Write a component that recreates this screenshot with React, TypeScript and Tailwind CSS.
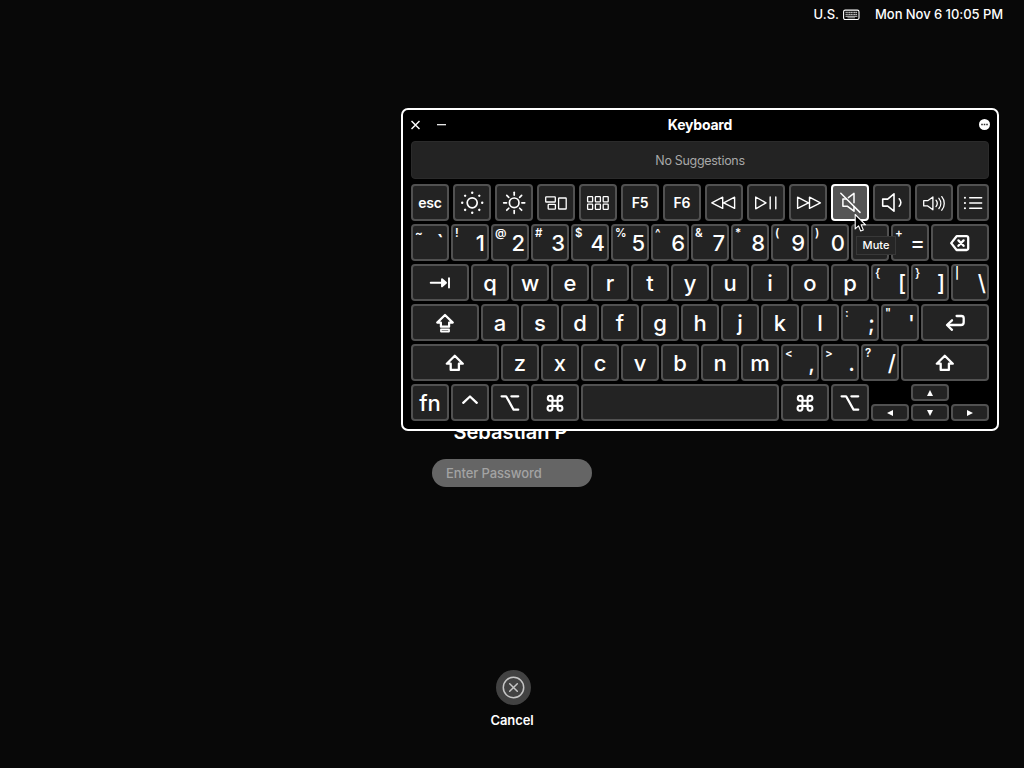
import { ReactNode } from "react";
import clsx from "clsx";

interface KeyProps {
    label?: string;
    shifted?: string;
    icon?: ReactNode;
    width?: string;
    small?: boolean;
    active?: boolean;
    inset?: string;
}

interface IconProps {
    width?: number;
    height?: number;
    stroke?: number;
    children: ReactNode;
}

// Icons are drawn in the coordinates of the key they sit on
const Icon = ({ width = 38, height = 37, stroke = 1.3, children }: IconProps) => (
    <svg
        className="shrink-0"
        width={width}
        height={height}
        viewBox={`0 0 ${width} ${height}`}
        fill="none"
        stroke="currentColor"
        strokeWidth={stroke}
        strokeLinecap="round"
        strokeLinejoin="round"
    >
        {children}
    </svg>
);

const angles = [0, 45, 90, 135, 180, 225, 270, 315];

const BrightnessDown = () => (
    <Icon stroke={1.7}>
        <circle cx="19.2" cy="18.8" r="5" />
        {angles.map(angle => (
            <circle key={angle} cx="19.2" cy="8.8" r="1.2" fill="currentColor" stroke="none" transform={`rotate(${angle} 19.2 18.8)`} />
        ))}
    </Icon>
);

const BrightnessUp = () => (
    <Icon stroke={1.7}>
        <circle cx="19.2" cy="18.8" r="4.8" />
        {angles.map(angle => (
            <path key={angle} d="M19.2 8.3v2.8" transform={`rotate(${angle} 19.2 18.8)`} />
        ))}
    </Icon>
);

const MissionControl = () => (
    <Icon stroke={1.3}>
        <rect x="8.7" y="12.8" width="9.6" height="5.2" rx="0.6" />
        <rect x="11.2" y="20.4" width="7.2" height="4.7" rx="0.6" />
        <rect x="21.6" y="14" width="7.6" height="11" rx="0.6" />
    </Icon>
);

const Launchpad = () => (
    <Icon stroke={1.3}>
        {[8.6, 16.4, 24.2].map(x => [12.6, 20.2].map(y => (
            <rect key={`${x}-${y}`} x={x} y={y} width="5" height="5.2" rx="0.6" />
        )))}
    </Icon>
);

const Rewind = () => (
    <Icon stroke={1.4}>
        <path d="M17.7 13.2v11.2L6.8 18.8ZM29.6 13.2v11.2L18.7 18.8Z" />
    </Icon>
);

const PlayPause = () => (
    <Icon stroke={1.4}>
        <path d="M8.7 13v11.8l10.3-5.9ZM23.2 13v11.8M28.8 13v11.8" />
    </Icon>
);

const FastForward = () => (
    <Icon stroke={1.4}>
        <path d="M8.6 13.2v11.2l10.9-5.6ZM20.5 13.2v11.2l10.9-5.6Z" />
    </Icon>
);

const Mute = () => (
    <Icon stroke={1.5}>
        <path d="M15.3 15h-3.4v7.2h4.3l6.8 5v-4.5M17.4 13.7l5.6-4.3v9.4" />
        <path d="M9.8 9.2 29 28.4" />
    </Icon>
);

const VolumeDown = () => (
    <Icon stroke={1.6}>
        <path d="M9.7 15.1h5l6.3-5.3v17.4l-6.3-5.1h-5Z" />
        <path d="M26.2 14.8c2.2 2.2 2.2 5.2 0 7.4" />
    </Icon>
);

const VolumeUp = () => (
    <Icon stroke={1.3}>
        <path d="M8.7 16.7h4l5.2-3.7v12.8l-5.2-3.9h-4Z" />
        <path d="M21 16.2c1.6 2 1.6 4.4 0 6.4M23.9 14.3c2.5 3 2.5 7.2 0 10.2M26.8 12.6c3.3 4 3.3 9.6 0 13.6" />
    </Icon>
);

const List = () => (
    <Icon width={32} stroke={1.4}>
        <path d="M12.7 13.8h12M12.7 19h12M12.7 24.3h12" />
        <path d="M7.9 13.8h.1M7.9 19h.1M7.9 24.3h.1" strokeWidth="2" />
    </Icon>
);

const Tab = () => (
    <Icon width={58} stroke={1.9}>
        <path d="M19.7 18.8h11" />
        <path d="m31 15.2 4 3.6-4 3.6Z" fill="currentColor" />
        <path d="M38 14.3v9.2" />
    </Icon>
);

const Backspace = () => (
    <Icon width={58} stroke={2.3}>
        <path d="M25.6 12.2h10a1.6 1.6 0 0 1 1.6 1.6v10.6a1.6 1.6 0 0 1-1.6 1.6h-10L20.2 19.1Z" />
        <path d="m27.4 16.4 5.2 5.4m0-5.4-5.2 5.4" />
    </Icon>
);

const CapsLock = () => (
    <Icon width={68} stroke={2.2}>
        <path d="m34 11 7.8 7.6h-3.7v4.1h-8.2v-4.1h-3.7Z" />
        <path d="M29.9 25.4h8.2v2.2h-8.2Z" strokeWidth="1.6" />
    </Icon>
);

const Return = () => (
    <Icon width={68} stroke={2.3}>
        <path d="M35.6 12h4.8a2.3 2.3 0 0 1 2.3 2.3v3.9a2.8 2.8 0 0 1-2.8 2.8H27" />
        <path d="m31 16.3-5 4.7 5 4.8" />
    </Icon>
);

const Shift = () => (
    <Icon width={88} stroke={2.3}>
        <path d="m43.8 11.7 8 8h-3.9v6.2h-8.2v-6.2h-3.9Z" />
    </Icon>
);

const Control = () => (
    <Icon stroke={2.3}>
        <path d="m12.2 18.8 6.8-6.3 6.8 6.3" />
    </Icon>
);

const Option = () => (
    <Icon stroke={2.3}>
        <path d="M10.6 12.3h4.5l7.5 13.4h4.6M20.4 12.3h6.8" />
    </Icon>
);

const Command = () => (
    <Icon width={48} stroke={2.1}>
        <path d="M21.4 16.7v5.2M26.6 16.7v5.2M21.4 16.7h5.2M21.4 21.9h5.2M21.4 16.7h-2.2a2.4 2.4 0 1 1 2.4-2.4v2.4M26.6 16.7v-2.4a2.4 2.4 0 1 1 2.4 2.4h-2.4M21.4 21.9v2.4a2.4 2.4 0 1 1-2.4-2.4h2.4M26.6 21.9H29a2.4 2.4 0 1 1-2.4 2.4v-2.4" />
    </Icon>
);

const Arrow = ({ d }: { d: string }) => (
    <svg className="shrink-0" width="8" height="8" viewBox="0 0 8 8" fill="currentColor">
        <path d={d} />
    </svg>
);

const Key = ({ label, shifted, icon, width = "w-[38px]", small, active, inset = "right-[2px]" }: KeyProps) => (
    <div
        className={clsx(
            "relative flex h-[37px] shrink-0 items-center justify-center rounded-[4px] border-2",
            active ? "border-white bg-[#555]" : "border-[#515151] bg-[#232323]",
            width
        )}
    >
        {icon}
        {shifted && (
            <>
                <span className="absolute top-0 left-[2px] text-[11.5px] leading-[15px] font-semibold">{shifted}</span>
                {label && (
                    <span className={clsx("absolute top-[5px] text-[22px] leading-6 font-medium", inset)}>{label}</span>
                )}
            </>
        )}
        {!shifted && label && (
            <span className={clsx(small ? "pt-px text-sm font-semibold tracking-[-0.2px]" : "text-[22px] leading-6 font-medium")}>{label}</span>
        )}
    </div>
);

const ArrowKey = ({ d }: { d: string }) => (
    <div className="flex h-[17px] w-[38px] items-center justify-center rounded-[4px] border-2 border-[#515151] bg-[#232323]">
        <Arrow d={d} />
    </div>
);

const functionKeys: KeyProps[] = [
    { label: "esc", small: true },
    { icon: <BrightnessDown /> },
    { icon: <BrightnessUp /> },
    { icon: <MissionControl /> },
    { icon: <Launchpad /> },
    { label: "F5", small: true },
    { label: "F6", small: true },
    { icon: <Rewind /> },
    { icon: <PlayPause /> },
    { icon: <FastForward /> },
    { icon: <Mute />, active: true },
    { icon: <VolumeDown /> },
    { icon: <VolumeUp /> },
    { icon: <List />, width: "w-8" },
];

const letters = (text: string): KeyProps[] => text.split("").map(label => ({ label }));

const rows: KeyProps[][] = [
    [
        { shifted: "~", label: "`", inset: "right-[3px]" },
        { shifted: "!", label: "1" },
        { shifted: "@", label: "2" },
        { shifted: "#", label: "3" },
        { shifted: "$", label: "4" },
        { shifted: "%", label: "5" },
        { shifted: "^", label: "6" },
        { shifted: "&", label: "7" },
        { shifted: "*", label: "8" },
        { shifted: "(", label: "9" },
        { shifted: ")", label: "0" },
        {},
        { shifted: "+", label: "=" },
        { icon: <Backspace />, width: "w-[58px]" },
    ],
    [
        { icon: <Tab />, width: "w-[58px]" },
        ...letters("qwertyuiop"),
        { shifted: "{", label: "[", inset: "right-px" },
        { shifted: "}", label: "]" },
        { shifted: "|", label: "\\", inset: "right-px" },
    ],
    [
        { icon: <CapsLock />, width: "w-[68px]" },
        ...letters("asdfghjkl"),
        { shifted: ":", label: ";" },
        { shifted: "\"", label: "'" },
        { icon: <Return />, width: "w-[68px]" },
    ],
    [
        { icon: <Shift />, width: "w-[88px]" },
        ...letters("zxcvbnm"),
        { shifted: "<", label: "," },
        { shifted: ">", label: "." },
        { shifted: "?", label: "/", inset: "right-px" },
        { icon: <Shift />, width: "w-[88px]" },
    ],
];

const bottomRow: KeyProps[] = [
    { label: "fn" },
    { icon: <Control /> },
    { icon: <Option /> },
    { icon: <Command />, width: "w-12" },
    { width: "w-[198px]" },
    { icon: <Command />, width: "w-12" },
    { icon: <Option /> },
];

const MenuBar = () => (
    <div className="flex h-[30px] w-full items-center justify-end pr-[21px] text-[13px] font-medium">
        <span>U.S.</span>
        <svg className="mr-px ml-[4px]" width="17" height="12" viewBox="0 0 17 12" fill="none" stroke="currentColor">
            <rect x="0.6" y="1.1" width="15.4" height="9.4" rx="1.6" strokeWidth="1.1" />
            <path d="M2.5 3.4h11.8M2.5 5.3h11.8" strokeWidth="1.3" strokeDasharray="1.4 .3" opacity="0.7" />
            <path d="M2.5 7.3h11.8" strokeWidth="1.2" opacity="0.7" />
            <path d="M4.5 8.8h7.5" opacity="0.6" />
        </svg>
        <span className="ml-[14px] tracking-[-0.05px]">Mon Nov 6 10:05 PM</span>
    </div>
);

const KeyboardWindow = () => (
    <div className="absolute top-[108px] left-[401px] h-[323px] w-[598px] rounded-[7px] border-2 border-white bg-black px-2">
        <div className="grid h-[31px] grid-cols-3 items-center">
            <svg width="36" height="11" viewBox="0 0 36 11" fill="none" stroke="currentColor" strokeWidth="1.4">
                <path d="m.5 .9 8 8.2m0-8.2-8 8.2" />
                <path d="M26 4.7h9" strokeWidth="1.2" />
            </svg>
            <span className="pb-[2px] text-center text-[14px] font-bold tracking-[-0.2px]">Keyboard</span>
            <svg className="-mt-[2px] -mr-px justify-self-end" width="11" height="11" viewBox="0 0 11 11">
                <circle cx="5.5" cy="5.5" r="5.5" fill="white" />
                <path d="M2.2 5.4h1.6M4.7 5.4h1.6M7.2 5.4h1.6" stroke="#333" strokeWidth="1.5" />
            </svg>
        </div>
        <div className="flex h-[38px] items-center justify-center rounded-[4px] border border-[#2b2b2b] bg-[#232323] pt-[2px] text-[12.5px] tracking-[-0.3px] text-[#a8a8a8]">
            No Suggestions
        </div>
        <div className="mt-[5px] flex flex-col gap-[3px]">
            <div className="flex gap-1">
                {functionKeys.map((key, index) => <Key key={index} {...key} />)}
            </div>
            {rows.map((row, index) => (
                <div key={index} className="flex gap-[2px]">
                    {row.map((key, keyIndex) => <Key key={keyIndex} {...key} />)}
                </div>
            ))}
            <div className="flex gap-[2px]">
                {bottomRow.map((key, index) => <Key key={index} {...key} />)}
                <div className="flex items-end gap-[2px]">
                    <ArrowKey d="M7 1v6L1 4Z" />
                    <div className="flex flex-col gap-[3px]">
                        <ArrowKey d="M1 7h6L4 1Z" />
                        <ArrowKey d="M1 1h6L4 7Z" />
                    </div>
                    <ArrowKey d="M1 1v6l6-3Z" />
                </div>
            </div>
        </div>
    </div>
);

export default function App() {
    return (
        <div className="relative flex h-screen w-screen flex-col items-center overflow-hidden bg-[#080808] font-[Inter,'Liberation_Sans',sans-serif] text-white">
            <MenuBar />
            <div className="mt-[390px] pr-[3px] text-xl leading-6 font-semibold">Sebastian P</div>
            <div className="mt-[15px] flex h-7 w-40 items-center rounded-full bg-[#656565] px-3.5 pt-[2px] text-[13px] font-medium tracking-[-0.1px] text-[#a3a3a3]">
                Enter Password
            </div>
            <div className="mt-[183px] flex flex-col items-center gap-[5px]">
                <div className="ml-[2px] flex size-[35px] items-center justify-center rounded-full bg-[#424242] text-[#c5c5c5]">
                    <svg width="23" height="23" viewBox="0 0 23 23" fill="none" stroke="currentColor" strokeWidth="1.5" strokeLinecap="round">
                        <circle cx="11.5" cy="11.5" r="10.2" />
                        <path d="m7.7 7.7 7.6 7.6m0-7.6-7.6 7.6" />
                    </svg>
                </div>
                <div className="text-[13px] leading-5 font-semibold tracking-[-0.1px]">Cancel</div>
            </div>
            <KeyboardWindow />
            <div className="absolute top-[236px] left-[856px] flex h-[19px] w-10 items-center justify-center border border-[#383838] bg-[#252525] text-[11px] font-medium">
                Mute
            </div>
            <svg className="absolute top-[213px] left-[854px]" width="14" height="20" viewBox="0 0 14 20">
                <path d="M1.2 1.5v14.4l3.3-3.1 2.2 5.2 2.6-1.1-2.2-5.1h4.5Z" fill="black" stroke="white" strokeWidth="1.1" strokeLinejoin="round" />
            </svg>
        </div>
    );
}
